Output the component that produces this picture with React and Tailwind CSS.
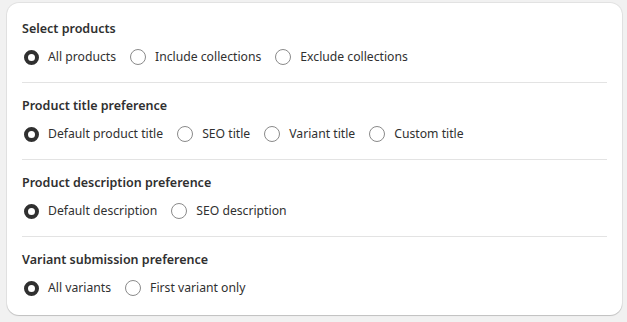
import React from "react";

const sections = [
  { title: "Select products", options: ["All products", "Include collections", "Exclude collections"] },
  { title: "Product title preference", options: ["Default product title", "SEO title", "Variant title", "Custom title"] },
  { title: "Product description preference", options: ["Default description", "SEO description"] },
  { title: "Variant submission preference", options: ["All variants", "First variant only"] },
];

function Radio({ checked }) {
  return (
    <span className="w-[16px] h-[16px] flex items-center justify-center shrink-0">
      {checked ? (
        <span className="w-[15px] h-[15px] rounded-full border-[4px] border-[#303030] bg-white box-border" />
      ) : (
        <span className="w-[16px] h-[16px] rounded-full border border-[#8a8a8a] bg-white box-border" />
      )}
    </span>
  );
}

export default function App() {
  return (
    <div className="w-[627px] h-[322px] bg-[#f1f1f1] pt-[3px] pl-[7px]" style={{ fontFamily: '"Noto Sans", "Open Sans", sans-serif' }}>
      <div className="w-[615px] bg-white rounded-[12px] px-[15px] pt-[16px] pb-[17px] shadow-[0_0_0_1px_rgba(0,0,0,0.06),0_1px_1px_rgba(0,0,0,0.15)] text-[#303030]">
        {sections.map((s, i) => (
          <div key={s.title}>
            {i > 0 && <div className="h-px bg-[#e3e3e3] mt-[15px] mb-[13px]" />}
            <div className="h-[20px] leading-[20px] text-[12.5px] font-semibold">{s.title}</div>
            <div className="mt-[8px] h-[20px] flex items-center gap-[14px] text-[12.2px] pl-[1px]">
              {s.options.map((o, j) => (
                <div key={o} className="flex items-center gap-[9px]">
                  <Radio checked={j === 0} />
                  <span className="leading-[20px]">{o}</span>
                </div>
              ))}
            </div>
          </div>
        ))}
      </div>
    </div>
  );
}
